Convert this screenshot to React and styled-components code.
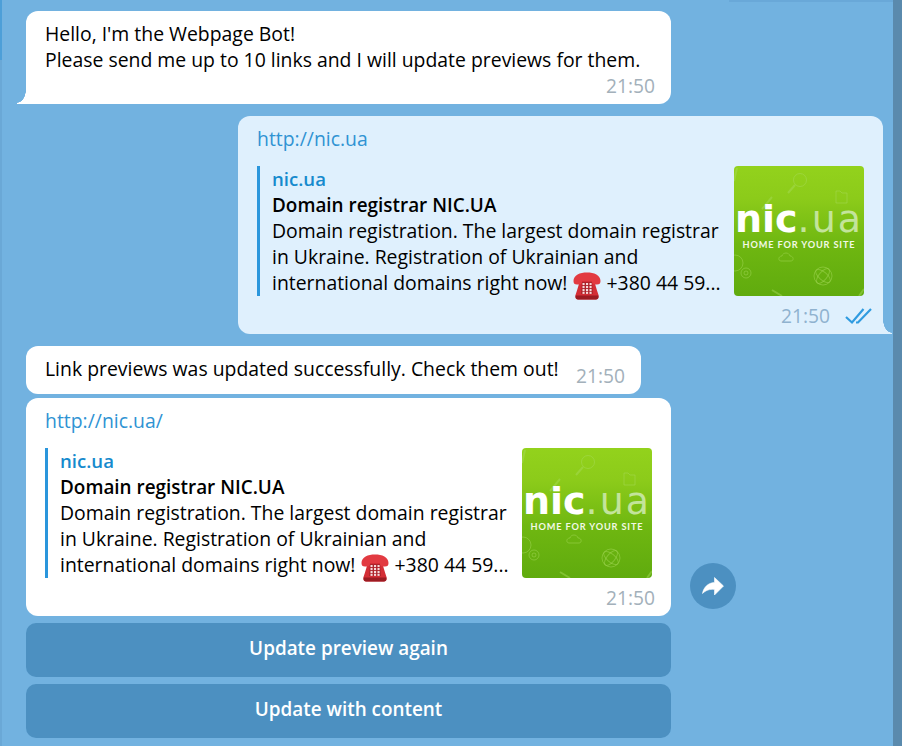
import styled, { createGlobalStyle } from "styled-components";

const GlobalStyle = createGlobalStyle`
  html, body {
    margin: 0;
    padding: 0;
    height: 100%;
    overflow: hidden;
    background: #72b2e0;
    font-family: "Open Sans", "Liberation Sans", sans-serif;
  }
`;

const Page = styled.div`
  display: flex;
  width: 902px;
  height: 746px;
  overflow: hidden;
  background: #72b2e0;
`;

const Chat = styled.div`
  flex: 1;
  position: relative;
  display: flex;
  flex-direction: column;
  padding: 11px 0 0 24px;
  border-left: 2px solid #6aa8d6;
  box-sizing: border-box;

  &::before {
    content: "";
    position: absolute;
    left: -2px;
    top: 0;
    width: 2px;
    height: 60px;
    background: #4d9fd8;
  }

  &::after {
    content: "";
    position: absolute;
    right: 0;
    top: 0;
    width: 164px;
    height: 2px;
    background: #69a8d8;
  }
`;

const Scrollbar = styled.div`
  width: 9px;
  background: #5a8aad;
`;

const Bubble = styled.div`
  position: relative;
  box-sizing: border-box;
  width: ${(p) => p.$width || 645}px;
  margin-left: ${(p) => (p.$out ? 212 : 0)}px;
  margin-bottom: ${(p) => p.$gap || 0}px;
  padding: 10px 16px 8px 19px;
  background: ${(p) => (p.$out ? "#dff0fd" : "#fff")};
  border-radius: 12px;
  color: #000;
  font-size: 19.4px;
  line-height: 26px;
  white-space: nowrap;

  ${(p) => p.$tail === "left" && `
    border-bottom-left-radius: 0;
    &::before {
      content: "";
      position: absolute;
      left: -9px;
      bottom: 0;
      width: 9px;
      height: 14px;
      background: radial-gradient(ellipse 9px 13px at 0 0, transparent 96%, #fff 100%);
    }
  `}

  ${(p) => p.$tail === "right" && `
    border-bottom-right-radius: 0;
    &::before {
      content: "";
      position: absolute;
      right: -9px;
      bottom: 0;
      width: 9px;
      height: 14px;
      background: radial-gradient(ellipse 9px 13px at 100% 0, transparent 96%, #dff0fd 100%);
    }
  `}
`;

const InlineRow = styled.div`
  display: flex;
  justify-content: space-between;
`;

const Meta = styled.div`
  display: flex;
  align-items: center;
  justify-content: flex-end;
  gap: 14px;
  height: 20px;
  margin-top: ${(p) => p.$top ?? 10}px;
  margin-right: ${(p) => p.$right || 0}px;
  color: ${(p) => (p.$out ? "#8fb2cf" : "#a3b0ba")};
  font-size: 19.2px;
  line-height: 20px;
`;

const LinkText = styled.div`
  color: #2f93d3;
`;

const Preview = styled.div`
  display: flex;
  justify-content: space-between;
  margin-top: 14px;
  margin-right: 3px;
`;

const PreviewText = styled.div`
  border-left: 3px solid #2a96dc;
  padding-left: 12px;
`;

const SiteName = styled.div`
  color: #168acd;
  font-size: 18.6px;
  font-weight: 600;
`;

const Title = styled.div`
  font-size: 18.9px;
  font-weight: 600;
`;

const Thumb = styled.div`
  position: relative;
  width: 130px;
  height: 130px;
  border-radius: 4px;
  overflow: hidden;
  background: linear-gradient(#93d21c 0%, #8ccb1a 25%, #6fb711 60%, #60ab0e 100%);
  color: #fff;
`;

const Doodles = styled.svg`
  position: absolute;
  inset: 0;
`;

const LogoWord = styled.div`
  position: absolute;
  left: 1px;
  top: 31px;
  font-family: "DejaVu Sans", "Open Sans", sans-serif;
  font-size: 38px;
  line-height: 44px;
  font-weight: 700;
  white-space: nowrap;
`;

const LogoLight = styled.span`
  font-weight: 400;
  letter-spacing: 2px;
  color: #c3e49b;
`;

const LogoTag = styled.div`
  position: absolute;
  left: 0;
  right: 0;
  top: 72px;
  text-align: center;
  font-family: "Lato", "Open Sans", sans-serif;
  font-size: 9.2px;
  line-height: 14px;
  font-weight: 700;
  letter-spacing: 0.85px;
  white-space: nowrap;
  color: #f2f9e4;
`;

const PhoneIcon = styled.svg`
  display: inline-block;
  vertical-align: -6px;
  margin: -4px 1px -4px 0;
`;

const ShareRow = styled.div`
  display: flex;
  align-items: flex-end;
`;

const ShareButton = styled.div`
  width: 46px;
  height: 46px;
  margin: 0 0 7px 19px;
  border-radius: 50%;
  background: #4c90c1;
  display: flex;
  align-items: center;
  justify-content: center;
`;

const Keyboard = styled.div`
  display: flex;
  flex-direction: column;
  gap: 7px;
  width: 645px;
  margin-top: 7px;
`;

const KeyButton = styled.div`
  box-sizing: border-box;
  height: 54px;
  padding-bottom: 4px;
  border-radius: 10px;
  background: #4c90c1;
  color: #fff;
  font-size: 18.9px;
  font-weight: 600;
  display: flex;
  align-items: center;
  justify-content: center;
`;

const Phone = () => (
  <PhoneIcon width="28" height="28" viewBox="0 0 28 28">
    <path d="M7 8 L21 8 C22 12 23.5 17 25.5 23 L25.5 25 C25.5 26.5 24.5 27.5 23 27.5 L5 27.5 C3.5 27.5 2.5 26.5 2.5 25 L2.5 23 C4.5 17 6 12 7 8 Z" fill="#d42e36" />
    <path d="M2.5 23.5 L25.5 23.5 L25.5 25 C25.5 26.5 24.5 27.5 23 27.5 L5 27.5 C3.5 27.5 2.5 26.5 2.5 25 Z" fill="#9c1b22" />
    <path d="M0.5 9 C0.5 3 7 0.5 14 0.5 C21 0.5 27.5 3 27.5 9 C27.5 11.5 26.5 12.5 24 12.5 L21.5 12.5 C20 12.5 19 11.5 19 10 L19 9 L9 9 L9 10 C9 11.5 8 12.5 6.5 12.5 L4 12.5 C1.5 12.5 0.5 11.5 0.5 9 Z" fill="#e23a41" />
    <path d="M9 10 L19 10 L20 22 L8 22 Z" fill="#ad232b" />
    <g fill="#f7dada">
      {[12, 15, 18, 20.8].map((y) =>
        [10.5, 14, 17.5].map((x) => <rect key={`${x}-${y}`} x={x - 1} y={y - 1} width="2.1" height="2.1" />)
      )}
    </g>
  </PhoneIcon>
);

const Checks = () => (
  <svg width="28" height="18" viewBox="0 0 28 18" fill="none" stroke="#2f9be0" strokeWidth="2.2">
    <path d="M2 10 L8 15.5 L19.5 2" />
    <path d="M12 15.5 L14 15.5 L27 2" />
  </svg>
);

const ShareIcon = () => (
  <svg width="22" height="19" viewBox="0 0 22 19">
    <path d="M12.5 0.5 L21.5 9 L12.5 18 L12.5 12.5 C7.5 11.8 3.5 13.5 0.5 16.5 C1.5 10.5 6 5.8 12.5 5.5 Z" fill="#fff" stroke="#fff" strokeWidth="0.6" strokeLinejoin="round" />
  </svg>
);

const NicLogo = () => (
  <Thumb>
    <Doodles width="130" height="130" viewBox="0 0 130 130" fill="none" stroke="#a9dc5e" strokeOpacity="0.45" strokeWidth="1">
      <circle cx="66" cy="14" r="6.5" />
      <path d="M61 19 L54 27" strokeWidth="2" />
      <path d="M28 43 L38 31" strokeWidth="2" />
      <path d="M102 25 L102 37 L113 37 L113 27 L108 27 L106 25 Z" />
      <path d="M47 95 C44 95 44 90 48 90 C49 86 55 86 56 90 C60 90 60 95 57 95 Z" />
      <circle cx="12" cy="107" r="5" />
      <circle cx="12" cy="107" r="2" />
      <circle cx="1" cy="97" r="8" />
      <circle cx="89" cy="110" r="9" />
      <ellipse cx="89" cy="110" rx="4" ry="9" transform="rotate(40 89 110)" />
      <ellipse cx="89" cy="110" rx="4" ry="9" transform="rotate(-50 89 110)" />
      <path d="M38 124 L48 130" strokeWidth="2" />
      <path d="M125 130 L130 123" strokeWidth="2" />
      <path d="M0 15 L3 2" strokeWidth="2" />
    </Doodles>
    <LogoWord>nic<LogoLight>.ua</LogoLight></LogoWord>
    <LogoTag>HOME FOR YOUR SITE</LogoTag>
  </Thumb>
);

const LinkPreview = () => (
  <Preview>
    <PreviewText>
      <SiteName>nic.ua</SiteName>
      <Title>Domain registrar NIC.UA</Title>
      <div>Domain registration. The largest domain registrar</div>
      <div>in Ukraine. Registration of Ukrainian and</div>
      <div>international domains right now! <Phone /> +380 44 59...</div>
    </PreviewText>
    <NicLogo />
  </Preview>
);

export default function App() {
  return (
    <Page>
      <GlobalStyle />
      <Chat>
        <Bubble $tail="left" $gap={12}>
          <div>Hello, I'm the Webpage Bot!</div>
          <div>Please send me up to 10 links and I will update previews for them.</div>
          <Meta $top={3}>21:50</Meta>
        </Bubble>
        <Bubble $out $tail="right" $gap={12}>
          <LinkText>http://nic.ua</LinkText>
          <LinkPreview />
          <Meta $out $right={-5}>21:50 <Checks /></Meta>
        </Bubble>
        <Bubble $width={615} $gap={4}>
          <InlineRow>
            <div>Link previews was updated successfully. Check them out!</div>
            <Meta>21:50</Meta>
          </InlineRow>
        </Bubble>
        <ShareRow>
          <Bubble>
            <LinkText>http://nic.ua/</LinkText>
            <LinkPreview />
            <Meta>21:50</Meta>
          </Bubble>
          <ShareButton><ShareIcon /></ShareButton>
        </ShareRow>
        <Keyboard>
          <KeyButton>Update preview again</KeyButton>
          <KeyButton>Update with content</KeyButton>
        </Keyboard>
      </Chat>
      <Scrollbar />
    </Page>
  );
}
